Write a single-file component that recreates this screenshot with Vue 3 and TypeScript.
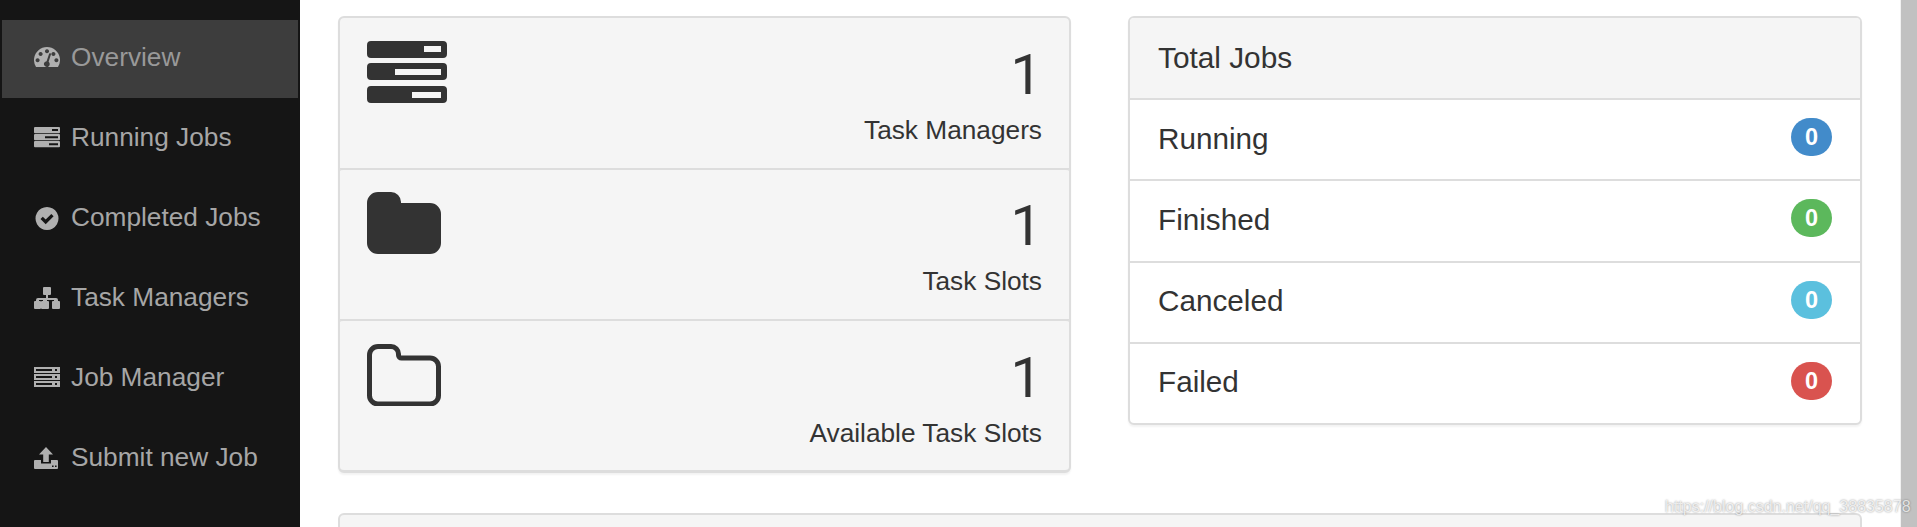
<script setup lang="ts">
interface NavItem {
  label: string
  d: string
  active?: boolean
}

const navItems: NavItem[] = [
  {
    label: 'Overview',
    active: true,
    d: 'M2.05 20A13 13 0 1 1 23.95 20ZM13 2.2a2 2 0 1 0 .01 0ZM6.6 5a2 2 0 1 0 .01 0ZM19.4 5a2 2 0 1 0 .01 0ZM3.6 11.2a2 2 0 1 0 .01 0ZM22.4 11.2a2 2 0 1 0 .01 0ZM15.2 6.6l-2.6 7.6a2.9 2.9 0 1 0 2 .6l2.4-7.6a1 1 0 0 0-1.8-.6Z',
  },
  {
    label: 'Running Jobs',
    d: 'M1 0h24a1 1 0 0 1 1 1v4.2a1 1 0 0 1-1 1H1a1 1 0 0 1-1-1V1a1 1 0 0 1 1-1ZM18 2v2h6V2ZM1 7h24a1 1 0 0 1 1 1v4.2a1 1 0 0 1-1 1H1a1 1 0 0 1-1-1V8a1 1 0 0 1 1-1ZM11 9.2v2h13v-2ZM1 14h24a1 1 0 0 1 1 1v4.2a1 1 0 0 1-1 1H1a1 1 0 0 1-1-1V15a1 1 0 0 1 1-1ZM15 16.2v2h9v-2Z',
  },
  {
    label: 'Completed Jobs',
    d: 'M13 0a11.5 11.5 0 1 0 .01 0ZM6.5 12l2.3-2.3 2.9 2.9 5.6-5.6 2.3 2.3-7.9 7.9Z',
  },
  {
    label: 'Task Managers',
    d: 'M10 0h6a1 1 0 0 1 1 1v6a1 1 0 0 1-1 1h-2v3h8a2 2 0 0 1 2 2v1h1a1 1 0 0 1 1 1v6a1 1 0 0 1-1 1h-6a1 1 0 0 1-1-1v-6a1 1 0 0 1 1-1h1v-1h-7v1h1a1 1 0 0 1 1 1v6a1 1 0 0 1-1 1h-6a1 1 0 0 1-1-1v-6a1 1 0 0 1 1-1h1v-1H5v1h1a1 1 0 0 1 1 1v6a1 1 0 0 1-1 1H1a1 1 0 0 1-1-1v-6a1 1 0 0 1 1-1h1v-1a2 2 0 0 1 2-2h8V8h-2a1 1 0 0 1-1-1V1a1 1 0 0 1 1-1Z',
  },
  {
    label: 'Job Manager',
    d: 'M0 0h26v6H0ZM2 2v2h16V2ZM21 2v2h2V2ZM0 7h26v6H0ZM2 9v2h16V9ZM21 9v2h2V9ZM0 14h26v6H0ZM2 16v2h16v-2ZM21 16v2h2v-2Z',
  },
  {
    label: 'Submit new Job',
    d: 'M12 0l7 7.5h-4.2V15H9.2V7.5H5ZM1 13h6v3.6h10V13h6a1 1 0 0 1 1 1v7a1 1 0 0 1-1 1H1a1 1 0 0 1-1-1v-7a1 1 0 0 1 1-1ZM18 18.500v1.600h1.600v-1.600ZM21 18.500v1.600h1.600v-1.600Z',
  },
]

const stats = [
  { label: 'Task Managers', value: 1, icon: 'tasks' },
  { label: 'Task Slots', value: 1, icon: 'folder' },
  { label: 'Available Task Slots', value: 1, icon: 'folder-open' },
]

const jobCounts = [
  { label: 'Running', count: 0, color: '#428bca' },
  { label: 'Finished', count: 0, color: '#5cb85c' },
  { label: 'Canceled', count: 0, color: '#5bc0de' },
  { label: 'Failed', count: 0, color: '#d9534f' },
]
</script>

<template>
  <div class="app">
    <nav class="sidebar">
      <a v-for="item in navItems" :key="item.label" class="nav-item" :class="{ active: item.active }">
        <svg class="nav-icon" width="26" height="24" viewBox="0 -1 26 24">
          <path :d="item.d" fill="currentColor" fill-rule="evenodd" />
        </svg>
        <span>{{ item.label }}</span>
      </a>
    </nav>

    <main class="content">
      <div class="columns">
        <section class="card stats">
          <div v-for="stat in stats" :key="stat.label" class="stat-row">
            <svg v-if="stat.icon === 'tasks'" class="stat-icon" width="80" height="62" viewBox="0 0 80 62">
              <path
                fill="#333"
                fill-rule="evenodd"
                d="M4 0h72a4 4 0 0 1 4 4v9a4 4 0 0 1-4 4H4a4 4 0 0 1-4-4V4a4 4 0 0 1 4-4ZM57 5v6h17V5ZM4 22h72a4 4 0 0 1 4 4v9a4 4 0 0 1-4 4H4a4 4 0 0 1-4-4v-9a4 4 0 0 1 4-4ZM28 28v6h46v-6ZM4 45h72a4 4 0 0 1 4 4v9a4 4 0 0 1-4 4H4a4 4 0 0 1-4-4v-9a4 4 0 0 1 4-4ZM45 51v6h29v-6Z"
              />
            </svg>
            <svg v-else-if="stat.icon === 'folder'" class="stat-icon" width="74" height="62" viewBox="0 0 74 62">
              <path fill="#333" d="M11 0h13a10 10 0 0 1 10 10v1h29a11 11 0 0 1 11 11v29a11 11 0 0 1-11 11H11A11 11 0 0 1 0 51V11A11 11 0 0 1 11 0Z" />
            </svg>
            <svg v-else class="stat-icon" width="74" height="62" viewBox="0 0 74 62">
              <path
                fill="none"
                stroke="#333"
                stroke-width="5"
                d="M11 2.500h13a7.500 7.500 0 0 1 7.500 7.500v1a3 3 0 0 0 3 3H63a8.500 8.500 0 0 1 8.500 8.500v29a8.500 8.500 0 0 1-8.500 8.500H11a8.500 8.500 0 0 1-8.500-8.500V11A8.500 8.500 0 0 1 11 2.500Z"
              />
            </svg>
            <div class="stat-text">
              <div class="stat-value">{{ stat.value }}</div>
              <div class="stat-label">{{ stat.label }}</div>
            </div>
          </div>
        </section>

        <section class="card jobs">
          <header class="jobs-heading">Total Jobs</header>
          <div v-for="job in jobCounts" :key="job.label" class="job-row">
            <span>{{ job.label }}</span>
            <span class="badge" :style="{ background: job.color }">{{ job.count }}</span>
          </div>
        </section>
      </div>

      <section class="next-panel"></section>
    </main>

    <div class="scrollbar"></div>
    <div class="watermark">https://blog.csdn.net/qq_38835878</div>
  </div>
</template>

<style>
html,
body {
  margin: 0;
  height: 527px;
  overflow: hidden;
  background: #fff;
}
</style>

<style scoped>
.app {
  position: relative;
  display: flex;
  height: 527px;
  overflow: hidden;
  font-family: 'Liberation Sans', Arial, sans-serif;
  color: #333;
}

.sidebar {
  width: 300px;
  flex-shrink: 0;
  box-sizing: border-box;
  padding: 20px 2px 0;
  background: #151515;
}

.nav-item {
  display: flex;
  align-items: center;
  gap: 11px;
  box-sizing: border-box;
  height: 78px;
  margin-bottom: 2px;
  padding: 0 0 3px 32px;
  font-size: 26.250px;
  color: #a6a6a6;
}

.nav-item.active {
  background: #3d3d3d;
  color: #999;
}

.nav-icon {
  flex-shrink: 0;
  color: #b0b0b0;
}

.content {
  flex: 1;
  min-width: 0;
  padding: 16px 38px 0;
}

.columns {
  display: grid;
  grid-template-columns: 733px 734px;
  gap: 57px;
  align-items: start;
}

.card {
  box-sizing: border-box;
  border: 2px solid #ddd;
  border-radius: 6px;
  box-shadow: 0 2px 2px rgba(0, 0, 0, 0.05);
  overflow: hidden;
}

.stats {
  height: 457px;
  background: #ddd;
  border-bottom-width: 3px;
}

.stat-row {
  display: flex;
  justify-content: space-between;
  box-sizing: border-box;
  height: 150px;
  padding: 23px 27px 0;
  background: #f5f5f5;
  border-top-left-radius: 3px;
  border-top-right-radius: 3px;
}

.stat-row + .stat-row {
  height: 151px;
  padding-top: 22px;
  border-top: 2px solid #ddd;
}

.stat-row:last-child {
  padding-top: 23px;
}

.stat-text {
  text-align: right;
}

.stat-value {
  font-family: Roboto, 'Liberation Sans', sans-serif;
  font-size: 56px;
  line-height: 62px;
  margin-top: 3px;
}

.stat-label {
  font-size: 26.250px;
  line-height: 37px;
  margin-top: 6px;
}

.jobs {
  background: #fff;
}

.jobs-heading {
  display: flex;
  align-items: center;
  height: 80px;
  padding: 0 28px;
  background: #f5f5f5;
  font-size: 29.800px;
}

.job-row {
  display: flex;
  align-items: center;
  justify-content: space-between;
  box-sizing: border-box;
  height: 81.250px;
  padding: 0 28px 2px;
  border-top: 2px solid #ddd;
  font-size: 29.700px;
}

.badge {
  min-width: 41px;
  height: 38px;
  margin-bottom: 3px;
  border-radius: 19px;
  color: #fff;
  font-size: 23.500px;
  font-weight: 700;
  line-height: 38px;
  text-align: center;
}

.next-panel {
  height: 40px;
  margin-top: 40px;
  box-sizing: border-box;
  background: #f5f5f5;
  border: 2px solid #ddd;
  border-radius: 6px 6px 0 0;
}

.scrollbar {
  width: 17px;
  flex-shrink: 0;
  box-sizing: border-box;
  border-left: 1px solid #f1f1f1;
  background: #c1c1c1;
}

.watermark {
  position: absolute;
  left: 1665px;
  top: 495px;
  font-size: 16px;
  line-height: 24px;
  color: rgba(255, 255, 255, 0.75);
  text-shadow: 0 0 2px rgba(0, 0, 0, 0.45);
  white-space: nowrap;
}
</style>
